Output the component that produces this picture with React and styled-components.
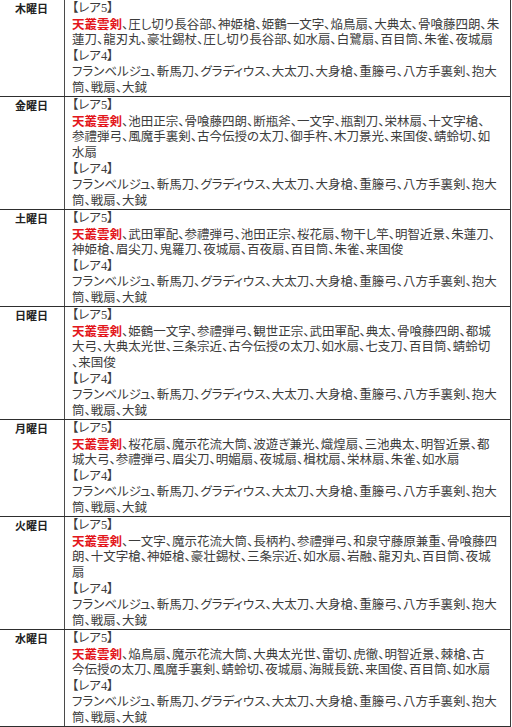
import styled, { createGlobalStyle } from "styled-components";

const GlobalStyle = createGlobalStyle`
  html, body {
    margin: 0;
    padding: 0;
    background: #fff;
  }
`;

const Table = styled.div`
  width: 511px;
  border-right: 1px solid #3a3a3a;
  box-sizing: border-box;
  background: #fff;
`;

const Row = styled.div`
  display: grid;
  grid-template-columns: 65px 1fr;
  border-bottom: 1px solid #2e2e2e;
`;

const DayCell = styled.div`
  box-sizing: border-box;
  border-right: 1px solid #4a4a4a;
  text-align: center;
  font-family: "Noto Sans CJK JP", sans-serif;
  font-weight: 700;
  font-size: 11px;
  line-height: 16px;
  color: #222;
  padding-right: 1px;
`;

const ContentCell = styled.div`
  padding-left: 7px;
  font-family: "Liberation Serif", "Noto Sans CJK JP", serif;
  font-size: 12.5px;
  font-feature-settings: "palt";
  color: #3c3c3c;
  overflow: hidden;
`;

const Line = styled.div`
  height: 16px;
  line-height: 16px;
  white-space: nowrap;
`;

const Highlight = styled.span`
  font-family: "Noto Sans CJK JP", sans-serif;
  font-weight: 700;
  color: #e3161c;
`;

const rare4 = [
  "フランベルジュ、斬馬刀、グラディウス、大太刀、大身槍、重籐弓、八方手裏剣、抱大",
  "筒、戦扇、大鉞",
];

const days = [
  {
    day: "木曜日",
    rare5: [
      "、圧し切り長谷部、神姫槍、姫鶴一文字、焔鳥扇、大典太、骨喰藤四朗、朱",
      "蓮刀、龍刃丸、豪壮錫杖、圧し切り長谷部、如水扇、白鷺扇、百目筒、朱雀、夜城扇",
    ],
  },
  {
    day: "金曜日",
    rare5: [
      "、池田正宗、骨喰藤四朗、断瓶斧、一文字、瓶割刀、栄林扇、十文字槍、",
      "参禮弾弓、風魔手裏剣、古今伝授の太刀、御手杵、木刀景光、来国俊、蜻蛉切、如",
      "水扇",
    ],
  },
  {
    day: "土曜日",
    rare5: [
      "、武田軍配、参禮弾弓、池田正宗、桜花扇、物干し竿、明智近景、朱蓮刀、",
      "神姫槍、眉尖刀、鬼羅刀、夜城扇、百夜扇、百目筒、朱雀、来国俊",
    ],
  },
  {
    day: "日曜日",
    rare5: [
      "、姫鶴一文字、参禮弾弓、観世正宗、武田軍配、典太、骨喰藤四朗、都城",
      "大弓、大典太光世、三条宗近、古今伝授の太刀、如水扇、七支刀、百目筒、蜻蛉切",
      "、来国俊",
    ],
  },
  {
    day: "月曜日",
    rare5: [
      "、桜花扇、魔示花流大筒、波遊ぎ兼光、熾煌扇、三池典太、明智近景、都",
      "城大弓、参禮弾弓、眉尖刀、明媚扇、夜城扇、楫枕扇、栄林扇、朱雀、如水扇",
    ],
  },
  {
    day: "火曜日",
    rare5: [
      "、一文字、魔示花流大筒、長柄杓、参禮弾弓、和泉守藤原兼重、骨喰藤四",
      "朗、十文字槍、神姫槍、豪壮錫杖、三条宗近、如水扇、岩融、龍刃丸、百目筒、夜城",
      "扇",
    ],
  },
  {
    day: "水曜日",
    rare5: [
      "、焔鳥扇、魔示花流大筒、大典太光世、雷切、虎徹、明智近景、棘槍、古",
      "今伝授の太刀、風魔手裏剣、蜻蛉切、夜城扇、海賊長銃、来国俊、百目筒、如水扇",
    ],
  },
];

function DayRow({ day, rare5 }) {
  return (
    <Row>
      <DayCell>{day}</DayCell>
      <ContentCell>
        <Line>【レア5】</Line>
        {rare5.map((text, i) => (
          <Line key={i}>
            {i === 0 && <Highlight>天叢雲剣</Highlight>}
            {text}
          </Line>
        ))}
        <Line>【レア4】</Line>
        {rare4.map((text, i) => (
          <Line key={i}>{text}</Line>
        ))}
      </ContentCell>
    </Row>
  );
}

export default function App() {
  return (
    <>
      <GlobalStyle />
      <Table>
        {days.map((d) => (
          <DayRow key={d.day} day={d.day} rare5={d.rare5} />
        ))}
      </Table>
    </>
  );
}
